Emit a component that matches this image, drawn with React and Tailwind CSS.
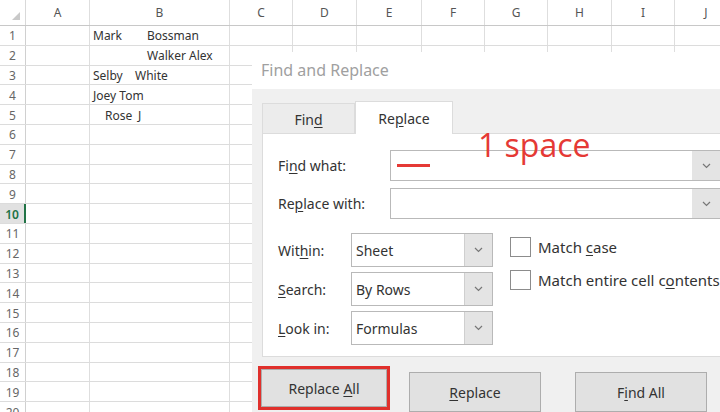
import React from 'react';

const cols = ['A', 'B', 'C', 'D', 'E', 'F', 'G', 'H', 'I', 'J'];
const widths = ['w-[64px]', 'w-[140px]', 'w-[63px]', 'w-[64px]', 'w-[65px]', 'w-[63px]', 'w-[63px]', 'w-[64px]', 'w-[63px]', 'w-[63px]'];

const cells = {
  1: <><span className="inline-block w-[54px]">Mark</span>Bossman</>,
  2: <span className="pl-[54px]">Walker Alex</span>,
  3: <><span className="inline-block w-[42px]">Selby</span>White</>,
  4: <>Joey Tom</>,
  5: <span className="pl-[12px]"><span className="inline-block w-[33px]">Rose</span>J</span>,
};

function Chevron() {
  return (
    <svg width="9" height="6" viewBox="0 0 9 6" fill="none">
      <polyline points="1,1 4.5,4.5 8,1" stroke="#777" strokeWidth="1.2" />
    </svg>
  );
}

function U({ children }) {
  return <span className="underline underline-offset-2">{children}</span>;
}

function Combo({ children }) {
  return (
    <div className="flex h-[34px] w-[142px] border border-[#b9b9b9] bg-white">
      <div className="flex flex-1 items-center pl-[4px]">{children}</div>
      <div className="flex w-[28px] items-center justify-center border-l border-[#cfcfcf] bg-[#e4e4e4]"><Chevron /></div>
    </div>
  );
}

function Check({ children }) {
  return (
    <div className="flex items-center gap-[7px] whitespace-nowrap text-[15px]">
      <div className="h-[20px] w-[21px] shrink-0 border border-[#8c8c8c] bg-white" />
      <span>{children}</span>
    </div>
  );
}

function TextInput() {
  return (
    <div className="flex h-full flex-1 border border-[#b9b9b9]">
      <div className="flex-1" />
      <div className="flex w-[28px] items-center justify-center bg-[#e4e4e4]"><Chevron /></div>
    </div>
  );
}

function Sheet() {
  return (
    <div className="font-['Noto_Sans',sans-serif] text-[12px] text-[#333]">
      <div className="flex h-[26px] border-b border-[#c8c8c8]">
        <div className="relative w-[26px] shrink-0 border-r border-[#d9d9d9]">
          <svg className="absolute bottom-[5px] right-[5px]" width="8" height="8" viewBox="0 0 8 8"><polygon points="8,0 8,8 0,8" fill="#c9c9c9" /></svg>
        </div>
        {cols.map((c, i) => (
          <div key={c} className={`${widths[i]} shrink-0 flex items-center justify-center border-r border-[#dedede] text-[#555]`}>{c}</div>
        ))}
      </div>
      {Array.from({ length: 21 }, (_, r) => r + 1).map(r => (
        <div key={r} className="flex h-[19.8px] border-b border-[#dcdcdc]">
          <div className={`w-[26px] shrink-0 flex items-center justify-center pt-[2px] ${r === 10 ? 'bg-[#e1e1e1] text-[#217346] font-semibold border-r-2 border-[#217346]' : 'text-[#666] border-r border-[#d0d0d0]'}`}>{r}</div>
          {cols.map((c, i) => (
            <div key={c} className={`${widths[i]} shrink-0 flex items-center whitespace-nowrap pt-[2px] border-r border-[#dedede] ${c === 'B' ? 'pl-[3px]' : ''}`}>
              {c === 'B' ? cells[r] : null}
            </div>
          ))}
        </div>
      ))}
    </div>
  );
}

function Dialog() {
  return (
    <div className="absolute left-[252px] top-[52px] h-[372px] w-[470px] font-['Noto_Sans',sans-serif] text-[14px] text-[#333]">
      <div className="flex h-[37px] items-center bg-white pl-[9px] pb-[2px] text-[16px] text-[#a0a0a0]">Find and Replace</div>
      <div className="h-full bg-[#f0f0f0] pl-[10px] pt-[12px]">
        <div className="flex h-[32px] items-end">
          <div className="flex h-[30px] w-[93px] items-center justify-center border border-b-0 border-[#dcdcdc] bg-[#ececec] pt-[2px]">Fin<U>d</U></div>
          <div className="relative z-10 -mb-px flex h-[33px] w-[98px] items-center justify-center border border-b-0 border-[#dcdcdc] bg-white">Re<U>p</U>lace</div>
        </div>
        <div className="h-[224px] border border-[#dcdcdc] bg-white pl-[15px] pt-[16px]">
          <div className="flex h-[31px] items-center">
            <div className="w-[112px]">Fi<U>n</U>d what:</div>
            <TextInput />
          </div>
          <div className="mt-[7px] flex h-[31px] items-center">
            <div className="w-[112px]">Re<U>p</U>lace with:</div>
            <TextInput />
          </div>
          <div className="mt-[14px] flex">
            <div className="flex flex-col gap-[5px]">
              <div className="flex items-center"><div className="w-[73px]">Wit<U>h</U>in:</div><Combo>Sheet</Combo></div>
              <div className="flex items-center"><div className="w-[73px]"><U>S</U>earch:</div><Combo>By Rows</Combo></div>
              <div className="flex items-center"><div className="w-[73px]"><U>L</U>ook in:</div><Combo>Formulas</Combo></div>
            </div>
            <div className="ml-[17px] mt-[3px] flex flex-col gap-[10px]">
              <Check>Match <U>c</U>ase</Check>
              <Check>Match entire cell c<U>o</U>ntents</Check>
            </div>
          </div>
        </div>
        <div className="mt-[9px] flex items-start">
          <div className="ml-[-4px] border-[3px] border-[#e0302c]">
            <div className="flex h-[38px] w-[126px] items-center justify-center border border-[#adadad] bg-[#e1e1e1]"><span>Replace <U>A</U>ll</span></div>
          </div>
          <div className="ml-[19px] mt-[6px] flex h-[40px] w-[132px] items-center justify-center border border-[#adadad] bg-[#e1e1e1]"><span><U>R</U>eplace</span></div>
          <div className="ml-[34px] mt-[6px] flex h-[40px] w-[132px] items-center justify-center border border-[#adadad] bg-[#e1e1e1]"><span>F<U>i</U>nd All</span></div>
        </div>
      </div>
    </div>
  );
}

export default function App() {
  return (
    <div className="relative h-[412px] w-[720px] overflow-hidden bg-white">
      <Sheet />
      <Dialog />
      <div className="absolute left-[478px] top-[129px] font-['Open_Sans',sans-serif] text-[32px] leading-[32px] text-[#e53935]">1 space</div>
      <div className="absolute left-[397px] top-[164px] h-[3px] w-[33px] bg-[#e53935]" />
    </div>
  );
}
